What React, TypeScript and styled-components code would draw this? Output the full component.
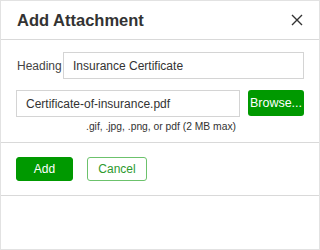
import React from "react";
import styled, { createGlobalStyle } from "styled-components";

const Global = createGlobalStyle`
  html, body { margin: 0; padding: 0; background: #fff; }
  body { font-family: "Liberation Sans", Arial, sans-serif; color: #333; }
  * { box-sizing: border-box; }
`;

const Frame = styled.div`
  width: 320px;
  height: 250px;
  border: 1px solid #e2e2e2;
  display: flex;
  flex-direction: column;
  background: #fff;
`;

const Header = styled.div`
  height: 39px;
  border-bottom: 1px solid #d9d9d9;
  display: flex;
  align-items: center;
  justify-content: space-between;
  padding: 0 15px 0 16px;
`;

const Title = styled.h2`
  margin: 0;
  font-size: 16.5px;
  font-weight: bold;
  color: #333;
`;

const Close = styled.button`
  border: 0;
  background: none;
  padding: 0;
  width: 14px;
  height: 14px;
  display: flex;
  align-items: center;
  justify-content: center;
  cursor: pointer;
`;

const Body = styled.div`
  padding: 12px 15px 0;
  height: 103px;
  border-bottom: 1px solid #d9d9d9;
  display: flex;
  flex-direction: column;
`;

const Row = styled.div<{ $gap: number }>`
  display: flex;
  align-items: center;
  gap: ${(p) => p.$gap}px;
`;

const Label = styled.label`
  font-size: 12px;
  color: #444;
  padding-left: 1px;
  width: 47px;
  flex: none;
`;

const TextInput = styled.div`
  height: 27px;
  border: 1px solid #d4d4d4;
  padding: 0 9px;
  display: flex;
  align-items: center;
  font-size: 12px;
  color: #333;
  flex: 1;
`;

const FileRow = styled(Row)`
  margin-top: 11px;
`;

const Browse = styled.button`
  width: 56px;
  height: 26px;
  border: 0;
  border-radius: 3px;
  background: #009900;
  color: #fff;
  font-family: "Liberation Sans", Arial, sans-serif;
  font-size: 12.5px;
  padding: 0;
  align-self: flex-start;
`;

const Hint = styled.div`
  font-size: 10.3px;
  color: #333;
  text-align: center;
  margin-top: 4px;
  padding-left: 2px;
`;

const Footer = styled.div`
  height: 53px;
  border-bottom: 1px solid #d9d9d9;
  padding: 14px 15px 0;
  display: flex;
  gap: 14px;
  align-items: flex-start;
`;

const Btn = styled.button<{ $primary?: boolean }>`
  height: 24px;
  border-radius: 3px;
  font-family: "Liberation Sans", Arial, sans-serif;
  font-size: 12px;
  padding: 0;
  width: ${(p) => (p.$primary ? 57 : 60)}px;
  background: ${(p) => (p.$primary ? "#009900" : "#fff")};
  color: ${(p) => (p.$primary ? "#fff" : "#2e9a2e")};
  border: 1px solid ${(p) => (p.$primary ? "#009900" : "#6cc26c")};
`;

export default function App() {
  return (
    <>
      <Global />
      <Frame>
        <Header>
          <Title>Add Attachment</Title>
          <Close aria-label="Close">
            <svg width="12" height="12" viewBox="0 0 12 12">
              <path d="M1 1 L11 11 M11 1 L1 11" stroke="#333" strokeWidth="1.4" />
            </svg>
          </Close>
        </Header>
        <Body>
          <Row $gap={0}>
            <Label>Heading</Label>
            <TextInput>Insurance Certificate</TextInput>
          </Row>
          <FileRow $gap={8}>
            <TextInput>Certificate-of-insurance.pdf</TextInput>
            <Browse>Browse...</Browse>
          </FileRow>
          <Hint>.gif, .jpg, .png, or pdf (2 MB max)</Hint>
        </Body>
        <Footer>
          <Btn $primary>Add</Btn>
          <Btn>Cancel</Btn>
        </Footer>
      </Frame>
    </>
  );
}
